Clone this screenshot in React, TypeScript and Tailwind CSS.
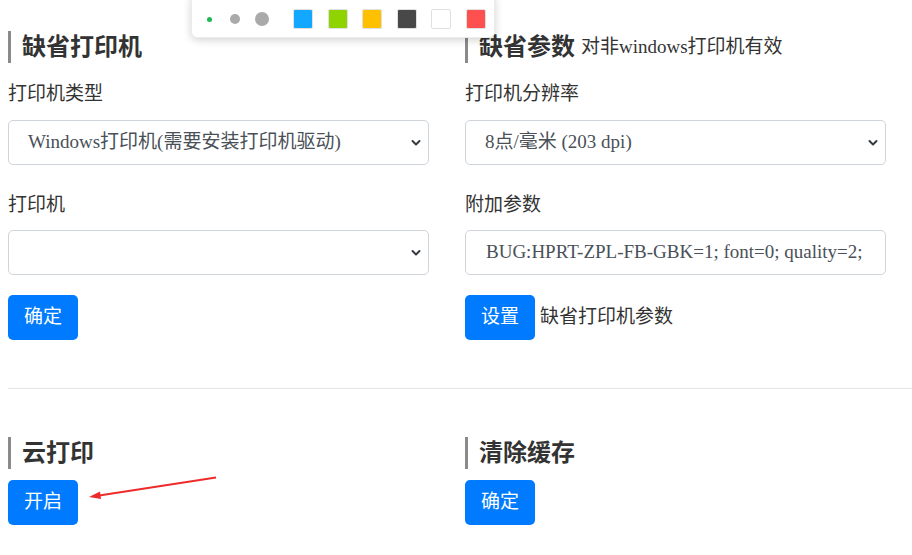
import React from 'react';

const FONT = { fontFamily: '"Liberation Serif", "Noto Sans CJK SC", serif' };

const Chevron = () => (
  <svg width="10" height="7" viewBox="0 0 10 7" className="absolute right-[7px] top-1/2 -translate-y-1/2 pointer-events-none">
    <path d="M1.5 1.5 L5 5 L8.5 1.5" fill="none" stroke="#343a40" strokeWidth="2" strokeLinecap="round" strokeLinejoin="round" />
  </svg>
);

const Heading: React.FC<{ children: React.ReactNode }> = ({ children }) => (
  <div className="h-[32px] flex items-center border-l-[3px] border-[#8a8a8a] pl-[11px] text-[#333]">
    {children}
  </div>
);

const Select: React.FC<{ value: string }> = ({ value }) => (
  <div className="relative h-[45px] w-full border border-[#ced4da] rounded-[5px] bg-white flex items-center pl-[19px] text-[19px] text-[#495057]">
    <span className="whitespace-nowrap">{value}</span>
    <Chevron />
  </div>
);

const Btn: React.FC<{ label: string }> = ({ label }) => (
  <button className="h-[45px] w-[70px] bg-[#007bff] text-white text-[19px] rounded-[5px] flex items-center justify-center shrink-0">
    {label}
  </button>
);

const Label: React.FC<{ children: React.ReactNode }> = ({ children }) => (
  <div className="text-[19px] leading-[28px] text-[#333]">{children}</div>
);

export default function App() {
  const colors = ['#12a8ff', '#8fd400', '#ffc000', '#484848', '#ffffff', '#ff5050'];
  return (
    <div className="relative w-[912px] h-[555px] overflow-hidden bg-white" style={FONT}>
      <div className="pt-[31px]">
        {/* top section */}
        <div className="flex pl-[8px] gap-x-[36px]">
          <div className="w-[421px] flex flex-col">
            <Heading>
              <span className="text-[24px] font-bold">缺省打印机</span>
            </Heading>
            <div className="mt-[17px] mb-[12px]"><Label>打印机类型</Label></div>
            <Select value="Windows打印机(需要安装打印机驱动)" />
            <div className="mt-[26px] mb-[11px]"><Label>打印机</Label></div>
            <Select value="" />
            <div className="mt-[20px]"><Btn label="确定" /></div>
          </div>
          <div className="w-[421px] flex flex-col">
            <Heading>
              <span className="text-[24px] font-bold">缺省参数</span>
              <span className="text-[19px] ml-[6px]">对非windows打印机有效</span>
            </Heading>
            <div className="mt-[17px] mb-[12px]"><Label>打印机分辨率</Label></div>
            <Select value="8点/毫米 (203 dpi)" />
            <div className="mt-[26px] mb-[11px]"><Label>附加参数</Label></div>
            <div className="h-[45px] w-full border border-[#ced4da] rounded-[5px] bg-white flex items-center pl-[20px] text-[19px] text-[#495057] overflow-hidden">
              <span className="whitespace-nowrap">BUG:HPRT-ZPL-FB-GBK=1; font=0; quality=2;</span>
            </div>
            <div className="mt-[20px] flex items-center gap-[5px]">
              <Btn label="设置" />
              <span className="text-[19px] text-[#333]">缺省打印机参数</span>
            </div>
          </div>
        </div>

        <div className="ml-[8px] mt-[48px] h-px bg-[#e5e5e5]" />

        {/* bottom section */}
        <div className="flex pl-[8px] gap-x-[36px] mt-[48px]">
          <div className="w-[421px] flex flex-col">
            <Heading>
              <span className="text-[24px] font-bold">云打印</span>
            </Heading>
            <div className="mt-[11px]"><Btn label="开启" /></div>
          </div>
          <div className="w-[421px] flex flex-col">
            <Heading>
              <span className="text-[24px] font-bold">清除缓存</span>
            </Heading>
            <div className="mt-[11px]"><Btn label="确定" /></div>
          </div>
        </div>
      </div>

      {/* annotation arrow */}
      <svg className="absolute left-0 top-0 pointer-events-none" width="912" height="555">
        <line x1="216" y1="477.5" x2="96" y2="496" stroke="#ee2b2b" strokeWidth="1.8" />
        <polygon points="89,497 100,491.5 101,499" fill="#ee2b2b" />
      </svg>

      {/* drawing toolbar */}
      <div className="absolute left-[191px] top-[-6px] w-[304px] h-[44px] bg-white rounded-[6px] shadow-[0_2px_8px_rgba(0,0,0,0.18)] border border-[#ececec] flex items-center pt-[6px]">
        <div className="w-[5px] h-[5px] rounded-full bg-[#1db954] ml-[15px]" />
        <div className="w-[10px] h-[10px] rounded-full bg-[#aaaaaa] ml-[18px]" />
        <div className="w-[14px] h-[14px] rounded-full bg-[#aaaaaa] ml-[15px]" />
        <div className="flex gap-[14.6px] ml-[24px]">
          {colors.map((c) => (
            <div
              key={c}
              className="w-[20px] h-[20px] rounded-[2px] border border-[#e0e0e0]"
              style={{ backgroundColor: c }}
            />
          ))}
        </div>
      </div>
    </div>
  );
}
